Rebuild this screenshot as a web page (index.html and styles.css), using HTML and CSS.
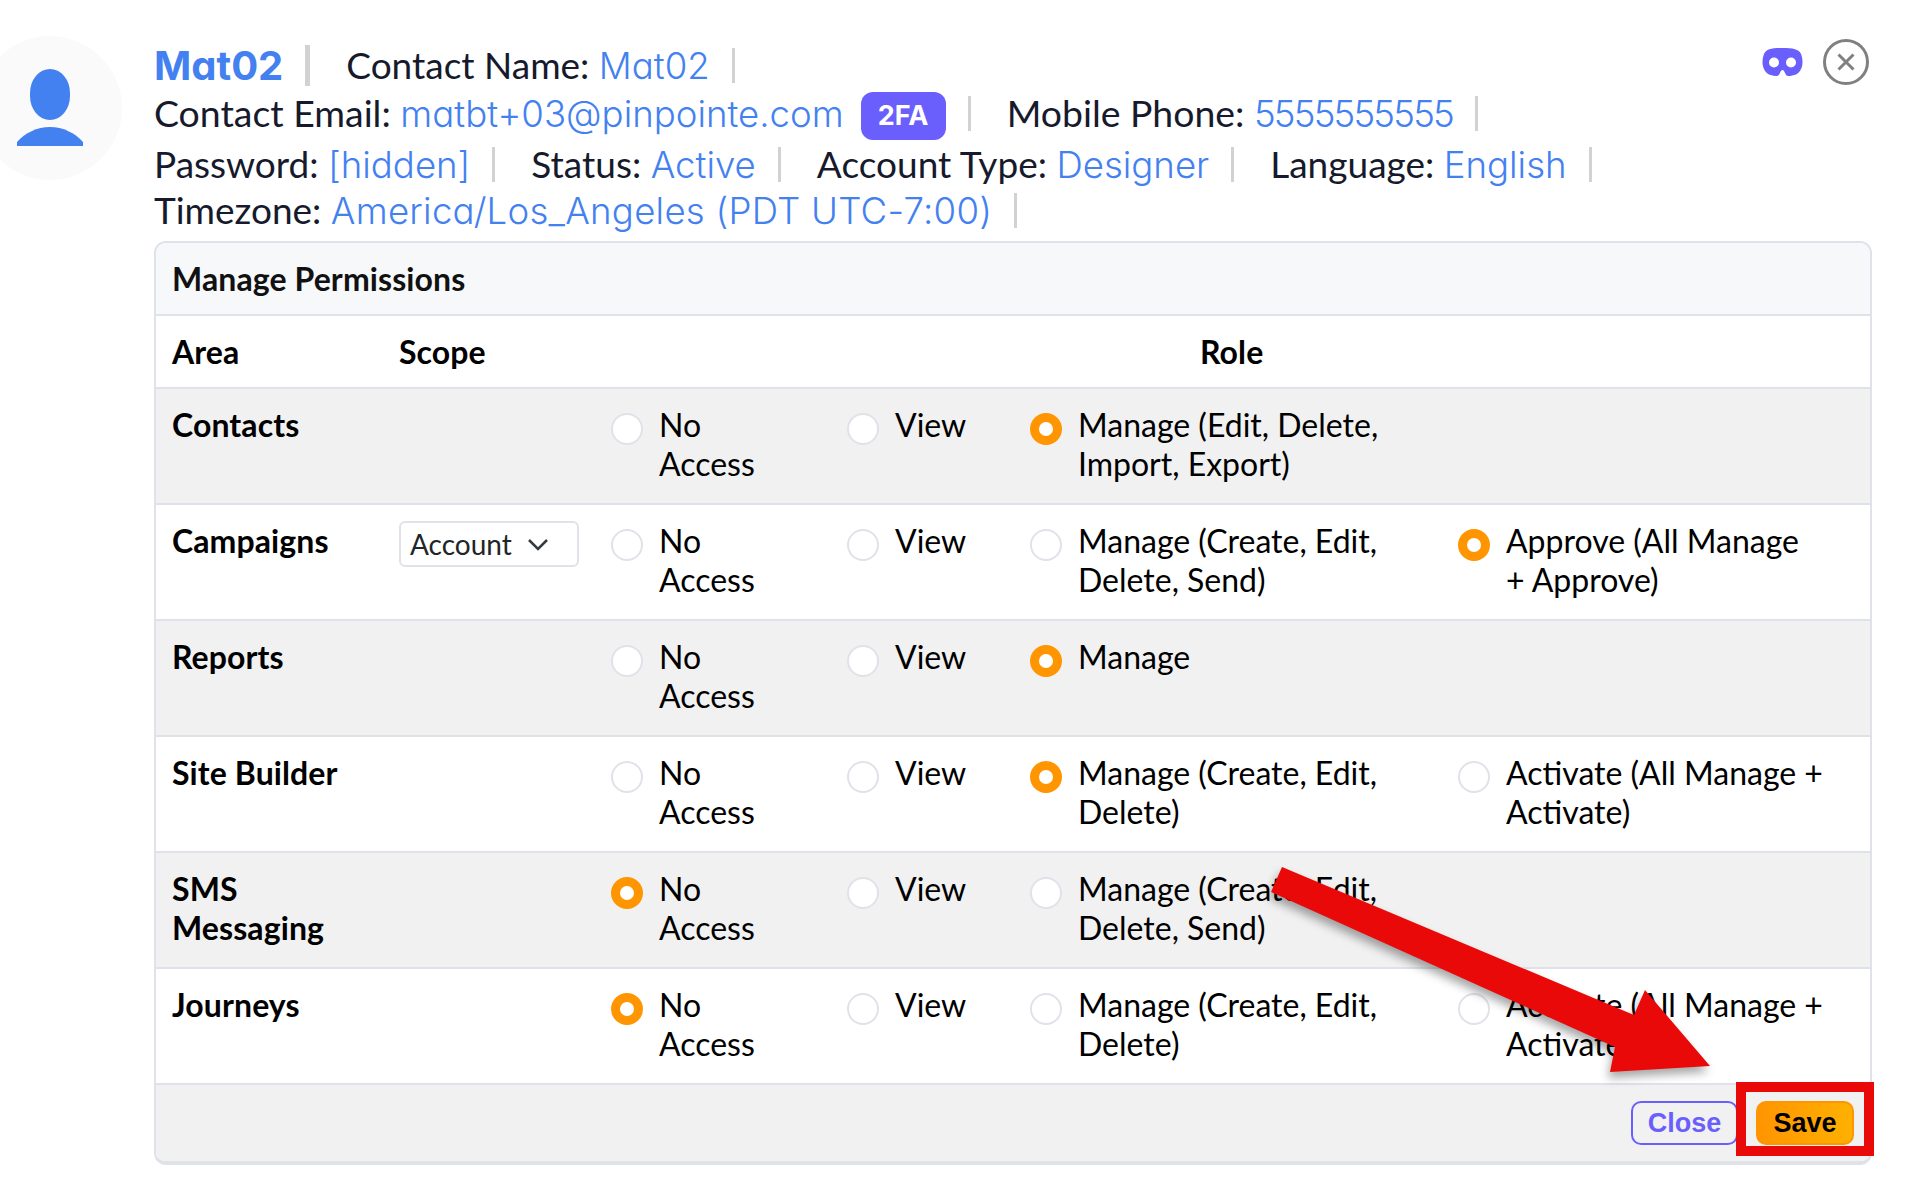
FILE: index.html
```html
<!DOCTYPE html>
<html lang="en">
<head>
    <meta charset="UTF-8">
    <title>Manage Permissions</title>
    <link rel="stylesheet" href="styles.css">
</head>
<body>
    <div class="page">
        <div class="avatar">
            <svg width="144" height="144" viewBox="0 0 144 144">
                <rect x="52" y="33" width="40" height="51" rx="20" ry="24" fill="#4481f0"/>
                <path d="M39 110v-4C47 97 59 91 72 91s25 6 33 15v4z" fill="#4481f0"/>
            </svg>
        </div>
        <div class="main">
            <div class="line line-1">
                <span class="name">Mat02</span><span class="sep sep-thick"></span>
                <span class="field">Contact Name: <span class="val">Mat02</span></span><span class="sep"></span>
                <div class="actions">
                    <svg width="41" height="29" viewBox="0 0 41 29">
                        <path fill-rule="evenodd" fill="#6a5ffc" d="M20.500 0C31 0 37 1 39 6c2 5 2 11 0 15-2 5-7 7-13 7-3 0-3-6-5.500-6S18 28 15 28C9 28 4 26 2 21 0 17 0 11 2 6 4 1 10 0 20.500 0zM12 9.500a5 5 0 1 0 0 10 5 5 0 0 0 0-10zm17 0a5 5 0 1 0 0 10 5 5 0 0 0 0-10z"/>
                    </svg>
                    <svg width="46" height="46" viewBox="0 0 46 46" fill="none" stroke="#808080">
                        <circle cx="23" cy="23" r="21.500" stroke-width="3"/>
                        <path d="M15.500 15.500l15 15M30.500 15.500l-15 15" stroke-width="3"/>
                    </svg>
                </div>
            </div>
            <div class="line line-2">
                <span>Contact Email: <span class="val">matbt+03@pinpointe.com</span></span>
                <span class="badge">2FA</span><span class="sep"></span>
                <span class="field">Mobile Phone: <span class="val val-digits">5555555555</span></span><span class="sep"></span>
            </div>
            <div class="line line-3">
                <span>Password: <span class="val">[hidden]</span></span><span class="sep"></span>
                <span class="field">Status: <span class="val">Active</span></span><span class="sep"></span>
                <span class="field">Account Type: <span class="val">Designer</span></span><span class="sep"></span>
                <span class="field">Language: <span class="val">English</span></span><span class="sep"></span>
            </div>
            <div class="line line-4">
                <span>Timezone: <span class="val val-long">America/Los_Angeles (PDT UTC-7:00)</span></span><span class="sep"></span>
            </div>

            <div class="card">
                <div class="card-head">Manage Permissions</div>
                <div class="row row-labels">
                    <b>Area</b>
                    <b>Scope</b>
                    <b class="role-label">Role</b>
                </div>

                <div class="row row-grey">
                    <b>Contacts</b>
                    <span></span>
                    <label class="opt"><i class="radio"></i><span>No<br>Access</span></label>
                    <label class="opt"><i class="radio"></i><span>View</span></label>
                    <label class="opt"><i class="radio on"></i><span>Manage (Edit, Delete,<br>Import, Export)</span></label>
                </div>
                <div class="row">
                    <b>Campaigns</b>
                    <div class="select">Account
                        <svg width="22" height="13" viewBox="0 0 22 13" fill="none" stroke="#343a40" stroke-width="2.500"><path d="M2 2l9 9 9-9"/></svg>
                    </div>
                    <label class="opt"><i class="radio"></i><span>No<br>Access</span></label>
                    <label class="opt"><i class="radio"></i><span>View</span></label>
                    <label class="opt"><i class="radio"></i><span>Manage (Create, Edit,<br>Delete, Send)</span></label>
                    <label class="opt"><i class="radio on"></i><span>Approve (All Manage<br>+ Approve)</span></label>
                </div>
                <div class="row row-grey">
                    <b>Reports</b>
                    <span></span>
                    <label class="opt"><i class="radio"></i><span>No<br>Access</span></label>
                    <label class="opt"><i class="radio"></i><span>View</span></label>
                    <label class="opt"><i class="radio on"></i><span>Manage</span></label>
                </div>
                <div class="row">
                    <b>Site Builder</b>
                    <span></span>
                    <label class="opt"><i class="radio"></i><span>No<br>Access</span></label>
                    <label class="opt"><i class="radio"></i><span>View</span></label>
                    <label class="opt"><i class="radio on"></i><span>Manage (Create, Edit,<br>Delete)</span></label>
                    <label class="opt"><i class="radio"></i><span>Activate (All Manage +<br>Activate)</span></label>
                </div>
                <div class="row row-grey">
                    <b>SMS<br>Messaging</b>
                    <span></span>
                    <label class="opt"><i class="radio on"></i><span>No<br>Access</span></label>
                    <label class="opt"><i class="radio"></i><span>View</span></label>
                    <label class="opt"><i class="radio"></i><span>Manage (Create, Edit,<br>Delete, Send)</span></label>
                </div>
                <div class="row">
                    <b>Journeys</b>
                    <span></span>
                    <label class="opt"><i class="radio on"></i><span>No<br>Access</span></label>
                    <label class="opt"><i class="radio"></i><span>View</span></label>
                    <label class="opt"><i class="radio"></i><span>Manage (Create, Edit,<br>Delete)</span></label>
                    <label class="opt"><i class="radio"></i><span>Activate (All Manage +<br>Activate)</span></label>
                </div>

                <div class="card-foot">
                    <button class="btn btn-close">Close</button>
                    <button class="btn btn-save">Save</button>
                </div>
            </div>
        </div>
    </div>

    <!-- annotation drawn over the screenshot -->
    <svg class="arrow" width="1920" height="1188" viewBox="0 0 1920 1188">
        <polygon points="1282,867 1634,1015 1645,990 1710,1066 1610,1072 1615,1047 1271,892" fill="#e90909"/>
    </svg>
    <div class="highlight"></div>
</body>
</html>
```

FILE: styles.css
```css
body {
    margin: 0;
    background: #fff;
    font-family: Lato, sans-serif;
    color: #000;
}
.page {
    display: flex;
    gap: 32px;
    padding-top: 36px;
    margin-left: -22px;
}
.avatar {
    width: 144px;
    height: 144px;
    flex: none;
    border-radius: 50%;
    background: #fafafa;
}
.main {
    width: 1718px;
    flex: none;
}
.line {
    display: flex;
    align-items: center;
    font-size: 37px;
    color: #161a2c;
    white-space: pre;
}
.line-1 {
    height: 40px;
    margin-top: 9px;
}
.line-2 {
    height: 48px;
    margin-top: 4px;
    font-size: 37.4px;
}
.line-3 {
    height: 40px;
    margin-top: 7px;
}
.line-4 {
    height: 40px;
    margin-top: 6px;
    margin-bottom: 11px;
}
.name {
    font-family: Inter, sans-serif;
    font-feature-settings: "cv11";
    font-weight: 700;
    font-size: 40px;
    color: #4481f0;
}
.val {
    font-family: Inter, sans-serif;
    font-feature-settings: "cv11";
    font-weight: 300;
    font-size: 36.6px;
    color: #4481f0;
}
.val-digits {
    letter-spacing: -1.8px;
}
.val-long {
    letter-spacing: 0.25px;
}
.sep {
    width: 3px;
    height: 35px;
    margin-left: 22px;
    background: #d2d2d2;
}
.sep-thick {
    width: 5px;
    height: 41px;
}
.field {
    margin-left: 36px;
}
.badge {
    width: 85px;
    height: 48px;
    margin-left: 17px;
    margin-top: 6px;
    background: #6a5ffc;
    border-radius: 12px;
    color: #fff;
    font-family: Inter, sans-serif;
    font-weight: 700;
    font-size: 27px;
    line-height: 48px;
    text-align: center;
}
.actions {
    display: flex;
    align-items: center;
    gap: 20px;
    margin-left: auto;
    margin-right: 3px;
    margin-top: -6px;
}
.card {
    border: 2px solid #dfe2e8;
    border-bottom-width: 4px;
    border-radius: 12px;
    overflow: hidden;
    font-size: 32px;
    line-height: 39px;
}
.card b,
.card-head {
    letter-spacing: 0.1px;
}
.card-head {
    height: 71px;
    box-sizing: border-box;
    padding: 16px 16px 0;
    background: #f7f8fa;
    font-weight: 700;
    color: #111;
}
.row {
    display: grid;
    grid-template-columns: 227px 212px 236px 183px 428px 1fr;
    box-sizing: border-box;
    height: 116px;
    padding: 16px 16px 0;
    border-top: 2px solid #dfe2e8;
    background: #fff;
}
.row-labels {
    height: 73px;
}
.role-label {
    grid-column: 3 / -1;
    padding-left: 589px;
}
.row-grey {
    background: #f1f1f1;
}
.opt {
    display: flex;
    gap: 16px;
}
.radio {
    width: 32px;
    height: 32px;
    flex: none;
    box-sizing: border-box;
    margin-top: 8px;
    border: 2px solid #dfe2e8;
    border-radius: 50%;
    background: #fff;
}
.radio.on {
    border: 9px solid #ff9500;
}
.select {
    display: flex;
    align-items: center;
    justify-content: space-between;
    box-sizing: border-box;
    width: 180px;
    height: 46px;
    padding: 0 28px 0 9px;
    border: 2px solid #dfe2e8;
    border-radius: 6px;
    background: #fff;
    font-size: 28px;
    color: #212529;
}
.card-foot {
    display: flex;
    justify-content: flex-end;
    gap: 18px;
    box-sizing: border-box;
    height: 78px;
    padding: 16px 16px 0;
    border-top: 2px solid #dfe2e8;
    background: #f1f1f1;
}
.btn {
    height: 44px;
    box-sizing: border-box;
    border-radius: 10px;
    font-family: "Liberation Sans", Arial, sans-serif;
    font-weight: 700;
    font-size: 27px;
    padding: 0;
}
.btn-close {
    width: 107px;
    border: 2px solid #6a5ffc;
    background: transparent;
    color: #6a5ffc;
}
.btn-save {
    width: 98px;
    border: 2px solid #ff9500;
    background: linear-gradient(to right, #ff9500, #ffb000);
    color: #000;
}
.arrow {
    position: absolute;
    top: 0;
    left: 0;
    pointer-events: none;
    filter: drop-shadow(-2px 6px 5px rgba(0, 0, 0, 0.35));
}
.highlight {
    position: absolute;
    top: 1082px;
    left: 1736px;
    width: 118px;
    height: 54px;
    border: 10px solid #e90909;
}
```
